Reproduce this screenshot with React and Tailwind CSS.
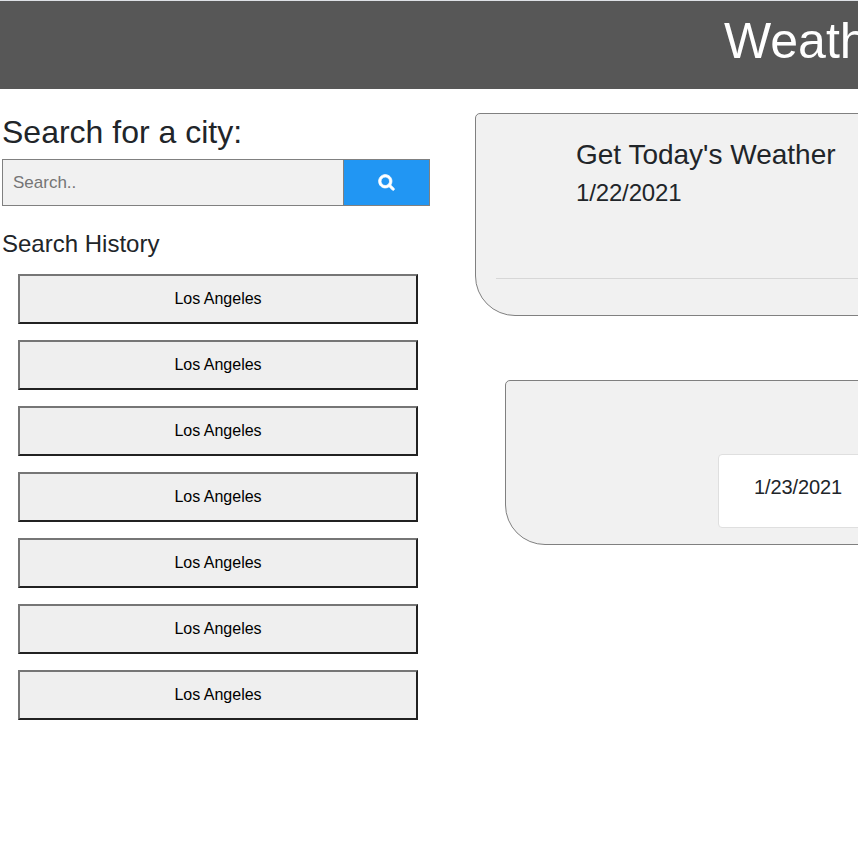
import React from "react";

const history = Array(7).fill("Los Angeles");

function SearchIcon() {
  return (
    <svg viewBox="0 64 1792 1792" className="h-[17px] w-[17px] overflow-visible fill-current stroke-current" strokeWidth="80" strokeLinejoin="round" aria-hidden="true">
      <path d="M1216 832q0-185-131.5-316.5T768 384 451.5 515.5 320 832t131.5 316.5T768 1280t316.5-131.5T1216 832zm512 832q0 52-38 90t-90 38q-54 0-90-38l-343-342q-179 124-399 124-143 0-273.5-55.5t-225-150-150-225T64 832t55.5-273.5 150-225 225-150T768 128t273.5 55.5 225 150 150 225T1472 832q0 220-124 399l343 343q37 37 37 90z" />
    </svg>
  );
}

export default function App() {
  return (
    <div className="h-[858px] w-[858px] overflow-hidden bg-white font-['Liberation_Sans',Arial,sans-serif] text-[#212529]">
      <header className="h-[89px] overflow-hidden border-t border-[#dee1e6] bg-[#575757] pl-[724px] pt-[10px]">
        <h1 className="whitespace-nowrap text-[50px] leading-[60px] text-white">Weather Dashboard</h1>
      </header>
      <main className="flex">
        <aside className="w-[430px] shrink-0 pl-[2px] pt-[24px]">
          <h2 className="text-[32px] leading-[38px]">Search for a city:</h2>
          <form className="mt-[8px] flex h-[47px]">
            <input
              type="text"
              placeholder="Search.."
              className="w-[342px] border border-[#808080] bg-[#f1f1f1] px-[10px] text-[17px] placeholder:text-[#757575]"
            />
            <button type="button" className="flex w-[86px] items-center justify-center border border-l-0 border-[#808080] bg-[#2196f3] text-white">
              <SearchIcon />
            </button>
          </form>
          <h4 className="mt-[23px] text-[24px] leading-[29px]">Search History</h4>
          <div className="ml-[16px] mt-[16px] flex w-[400px] flex-col gap-[16px]">
            {history.map((city, i) => (
              <button key={i} className="h-[50px] border-2 border-t-[#767676] border-l-[#767676] border-r-[#212121] border-b-[#212121] bg-[#efefef] text-[16px] text-black">
                {city}
              </button>
            ))}
          </div>
        </aside>
        <div className="ml-[45px] mt-[24px] w-[383px] shrink-0 overflow-hidden">
          <section className="h-[203px] w-[800px] rounded-[5px] rounded-bl-[40px] border border-[#808080] bg-[#f1f1f1] px-[20px] pt-[24px]">
            <h3 className="pl-[80px] text-[28px] leading-[34px]">Get Today's Weather</h3>
            <h4 className="mt-[6px] pl-[80px] text-[24px] leading-[29px] tracking-[-0.15px]">1/22/2021</h4>
            <hr className="mt-[71px] border-t border-[#d7d7d7]" />
          </section>
          <section className="ml-[30px] mt-[64px] h-[165px] w-[740px] rounded-[5px] rounded-bl-[40px] border border-[#808080] bg-[#f1f1f1] pl-[212px] pt-[73px]">
            <div className="h-[74px] w-[160px] rounded-[4px] border border-[#dfdfdf] bg-white pl-[35px] pt-[20px]">
              <h5 className="text-[20px] leading-[24px] tracking-[-0.12px]">1/23/2021</h5>
            </div>
          </section>
        </div>
      </main>
    </div>
  );
}
